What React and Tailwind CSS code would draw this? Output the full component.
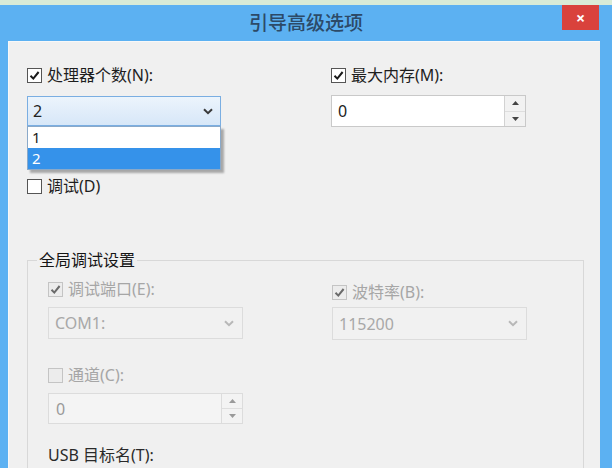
import React from "react";

const FONT = { fontFamily: '"Noto Sans", "Noto Sans CJK SC", sans-serif' };

function Check({ checked, disabled }) {
  return (
    <div
      className={
        "w-[15px] h-[15px] border flex items-center justify-center shrink-0 " +
        (disabled ? "border-[#c4c4c4] bg-[#ececec]" : "border-[#555] bg-white")
      }
    >
      {checked && (
        <svg width="11" height="11" viewBox="0 0 11 11">
          <path
            d="M1.5 5.8 L4.3 8.6 L9.6 2"
            fill="none"
            stroke={disabled ? "#6a6a6a" : "#1a1a1a"}
            strokeWidth="2"
          />
        </svg>
      )}
    </div>
  );
}

function CheckRow({ checked, disabled, label }) {
  return (
    <div className="flex items-center h-[20px] gap-[5px]">
      <Check checked={checked} disabled={disabled} />
      <span
        className={
          "text-[16px] leading-[20px] " +
          (disabled ? "text-[#a6a6a6]" : "text-[#1e1e1e]")
        }
      >
        {label}
      </span>
    </div>
  );
}

function Chevron({ color }) {
  return (
    <svg width="10" height="7" viewBox="0 0 10 7">
      <path d="M1 1.2 L5 5.2 L9 1.2" fill="none" stroke={color} strokeWidth="2" />
    </svg>
  );
}

function Spinner({ disabled }) {
  const c = disabled ? "#9a9a9a" : "#444";
  return (
    <div
      className={
        "w-[21px] h-full flex flex-col border-l " +
        (disabled ? "border-[#dcdcdc] bg-[#f3f3f3]" : "border-[#d2d2d2] bg-[#f2f2f2]")
      }
    >
      <div className="flex-1 flex items-center justify-center border-b border-[#dedede]">
        <svg width="7" height="4" viewBox="0 0 7 4">
          <path d="M0 4 L3.5 0 L7 4 Z" fill={c} />
        </svg>
      </div>
      <div className="flex-1 flex items-center justify-center">
        <svg width="7" height="4" viewBox="0 0 7 4">
          <path d="M0 0 L3.5 4 L7 0 Z" fill={c} />
        </svg>
      </div>
    </div>
  );
}

export default function App() {
  return (
    <div
      className="w-[612px] h-[468px] overflow-hidden bg-[#5cb1f2] flex flex-col"
      style={FONT}
    >
      <div className="h-[5px] bg-[#d9ebd7] shrink-0" />
      <div className="h-[36px] shrink-0 flex items-start">
        <div className="w-[50px]" />
        <div className="flex-1 h-full flex items-center justify-center text-[19px] font-medium text-[#2c4a68]">
          引导高级选项
        </div>
        <div className="w-[37px] h-[25px] bg-[#d9423c] flex items-center justify-center text-white text-[16px] font-bold leading-none">
          ×
        </div>
        <div className="w-[13px]" />
      </div>
      <div className="flex-1 ml-[8px] mr-[12px] bg-[#f0f0f0] border-t border-l border-[#f8f8f8] pl-[18px] pr-[16px] pt-[23px]">
        <div className="flex">
          <div className="w-[304px] shrink-0">
            <CheckRow checked label="处理器个数(N):" />
            <div className="relative mt-[11px] w-[194px]">
              <div className="h-[30px] border border-[#7aaee2] bg-gradient-to-b from-[#ecf4fc] to-[#d7e7f8] flex items-center pl-[5px] pr-[7px]">
                <span className="flex-1 text-[16px] text-[#222]">2</span>
                <Chevron color="#3a3a3a" />
              </div>
              <div className="absolute left-0 top-full w-[194px] border border-[#8aa9c9] bg-white shadow-[3px_3px_2px_rgba(0,0,0,0.3)] z-10">
                <div className="h-[21px] flex items-center pl-[4px] text-[15px] text-[#222] bg-white">
                  1
                </div>
                <div className="h-[21px] flex items-center pl-[4px] text-[15px] text-white bg-[#3592ea]">
                  2
                </div>
              </div>
            </div>
            <div className="mt-[50px]">
              <CheckRow label="调试(D)" />
            </div>
          </div>
          <div>
            <CheckRow checked label="最大内存(M):" />
            <div className="mt-[10px] w-[195px] h-[32px] border border-[#c9c9c9] bg-white flex">
              <div className="flex-1 flex items-center pl-[6px] text-[16px] text-[#222]">0</div>
              <Spinner />
            </div>
          </div>
        </div>

        <fieldset className="mt-[54px] border border-[#d8d8d8] pl-[20px] pt-[9px] h-[260px]">
          <legend className="ml-[-11px] px-[2px] text-[16px] leading-[20px] text-[#151515]">
            全局调试设置
          </legend>
          <div className="flex">
            <div className="w-[284px] shrink-0">
              <CheckRow checked disabled label="调试端口(E):" />
              <div className="mt-[8px] w-[195px] h-[32px] border border-[#dcdcdc] bg-[#f1f1f1] flex items-center pl-[6px] pr-[8px]">
                <span className="flex-1 text-[16px] text-[#a8a8a8]">COM1:</span>
                <Chevron color="#b8b8b8" />
              </div>
              <div className="mt-[26px]">
                <CheckRow disabled label="通道(C):" />
              </div>
              <div className="mt-[8px] w-[195px] h-[31px] border border-[#dcdcdc] bg-[#f4f4f4] flex">
                <div className="flex-1 flex items-center pl-[7px] text-[16px] text-[#9a9a9a]">0</div>
                <Spinner disabled />
              </div>
              <div className="mt-[21px] text-[16px] leading-[20px] text-[#2a2a2a]">
                USB 目标名(T):
              </div>
            </div>
            <div className="pt-[3px]">
              <CheckRow checked disabled label="波特率(B):" />
              <div className="mt-[5px] w-[195px] h-[33px] border border-[#dcdcdc] bg-[#f1f1f1] flex items-center pl-[6px] pr-[8px]">
                <span className="flex-1 text-[16px] text-[#a8a8a8]">115200</span>
                <Chevron color="#b8b8b8" />
              </div>
            </div>
          </div>
        </fieldset>
      </div>
    </div>
  );
}
